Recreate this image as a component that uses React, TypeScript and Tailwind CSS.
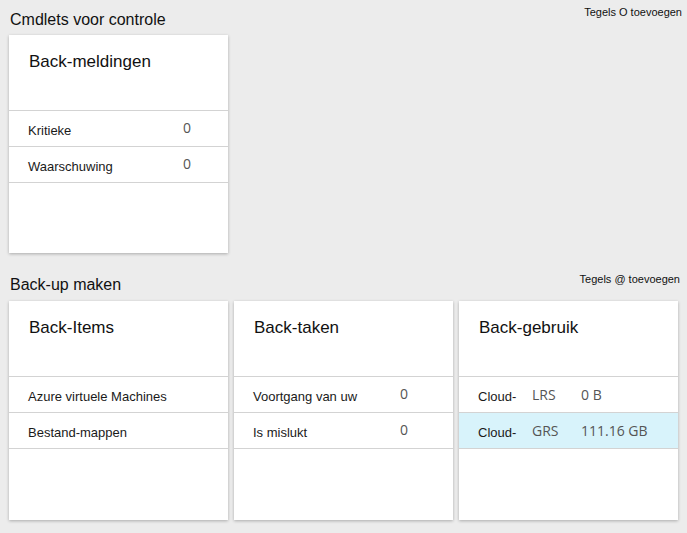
const sans = "font-['Liberation_Sans',Arial,sans-serif]";
const seg = "font-['Open_Sans','Noto_Sans',sans-serif]";

type Row = { label: string; mid?: string; value?: string; active?: boolean };

function RowGrid({ label, mid, value, active }: Row) {
  return (
    <div className={`h-[36px] grid grid-cols-[54px_49px_1fr] items-center pl-[19px] border-b border-[#d3d3d3] ${active ? "bg-[#d8f3fb]" : ""}`}>
      <span className={`${sans} text-[13px] leading-none pt-[4px] text-[#1a1a1a]`}>{label}</span>
      <span className={`${seg} text-[14px] leading-none text-[#555]`}>{mid}</span>
      <span className={`${seg} text-[14px] leading-none text-[#555]`}>{value}</span>
    </div>
  );
}

function LabelRow({ label, value, valueLeft }: { label: string; value?: string; valueLeft: string }) {
  return (
    <div className={`h-[36px] grid ${valueLeft} items-center pl-[19px] border-b border-[#d3d3d3]`}>
      <span className={`${sans} text-[13px] leading-none pt-[4px] text-[#1a1a1a] whitespace-nowrap`}>{label}</span>
      <span className={`${seg} text-[14px] leading-none text-[#555] pb-[1px]`}>{value}</span>
    </div>
  );
}

function Card({ title, h, children }: { title: string; h: string; children: React.ReactNode }) {
  return (
    <div className={`w-[219px] ${h} bg-white shadow-[0_1px_3px_rgba(0,0,0,0.28)] flex flex-col`}>
      <div className="h-[76px] pl-[20px] pt-[17px] border-b border-[#d3d3d3]">
        <div className={`${sans} text-[17px] leading-[20px] text-[#111]`}>{title}</div>
      </div>
      {children}
    </div>
  );
}

export default function App() {
  return (
    <div className="w-[687px] h-[533px] bg-[#ececec] overflow-hidden">
      <div className="h-[35px] flex justify-between pl-[10px] pr-[5px]">
        <div className={`${sans} text-[16px] leading-[20px] text-[#111] pt-[10px]`}>Cmdlets voor controle</div>
        <div className={`${sans} text-[11px] leading-[14px] text-[#111] pt-[5px]`}>Tegels O toevoegen</div>
      </div>
      <div className="pl-[9px]">
        <Card title="Back-meldingen" h="h-[218px]">
          <LabelRow label="Kritieke" value="0" valueLeft="grid-cols-[155px_1fr]" />
          <LabelRow label="Waarschuwing" value="0" valueLeft="grid-cols-[155px_1fr]" />
        </Card>
      </div>
      <div className="h-[48px] flex justify-between pl-[10px] pr-[7px]">
        <div className={`${sans} text-[16px] leading-[20px] text-[#111] pt-[22px]`}>Back-up maken</div>
        <div className={`${sans} text-[11px] leading-[14px] text-[#111] pt-[19px]`}>Tegels @ toevoegen</div>
      </div>
      <div className="pl-[9px] flex gap-[6px]">
        <Card title="Back-Items" h="h-[219px]">
          <LabelRow label="Azure virtuele Machines" valueLeft="grid-cols-[155px_1fr]" />
          <LabelRow label="Bestand-mappen" valueLeft="grid-cols-[155px_1fr]" />
        </Card>
        <Card title="Back-taken" h="h-[219px]">
          <LabelRow label="Voortgang van uw" value="0" valueLeft="grid-cols-[147px_1fr]" />
          <LabelRow label="Is mislukt" value="0" valueLeft="grid-cols-[147px_1fr]" />
        </Card>
        <Card title="Back-gebruik" h="h-[219px]">
          <RowGrid label="Cloud-" mid="LRS" value="0 B" />
          <RowGrid label="Cloud-" mid="GRS" value="111.16 GB" active />
        </Card>
      </div>
    </div>
  );
}
